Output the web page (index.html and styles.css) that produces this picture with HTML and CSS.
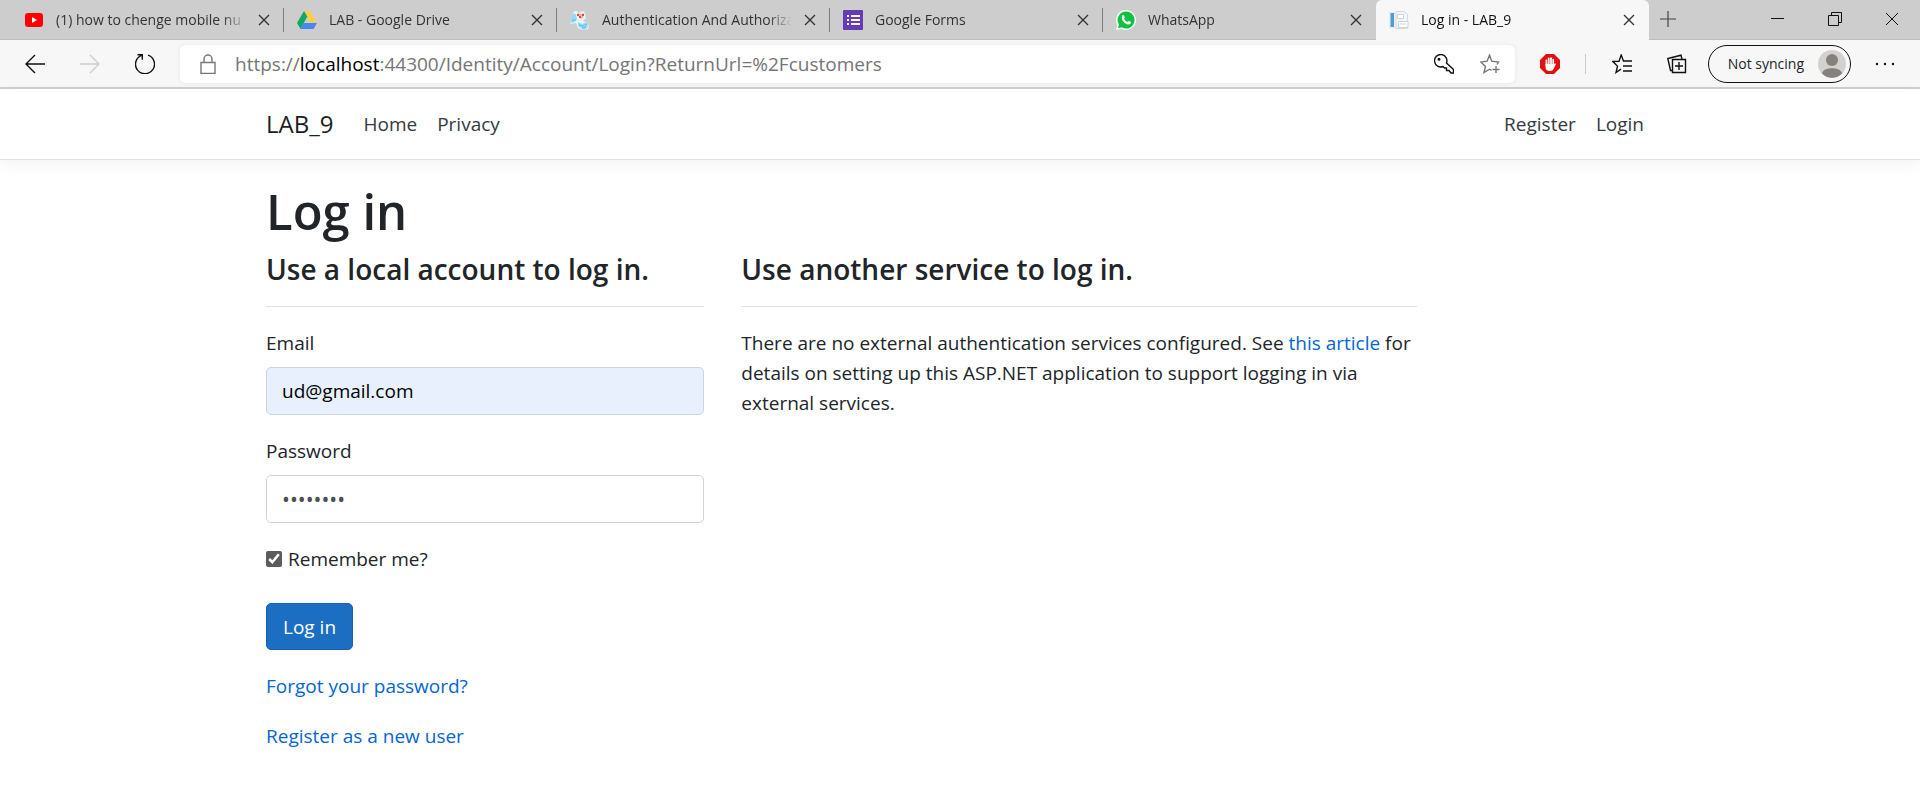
FILE: index.html
```
<!DOCTYPE html>
<html lang="en">
<head>
<meta charset="utf-8">
<title>Log in - LAB_9</title>
<link rel="stylesheet" href="styles.css">
</head>
<body>
<div class="browser">
  <div class="tabstrip">
    <div class="tab">
      <svg class="favicon" viewBox="0 0 20 20"><rect x="1" y="3" width="18" height="14" rx="3" fill="#f00"/><path d="M8 7l5 3-5 3z" fill="#fff"/></svg>
      <span class="tab-title">(1) how to chenge mobile nu</span>
      <button class="tab-close" aria-label="Close tab"><svg viewBox="0 0 12 12"><path d="M1 1l10 10M11 1L1 11"/></svg></button>
    </div>
    <div class="tab">
      <svg class="favicon" viewBox="0 0 20 20"><path d="M7 1h6l7 12h-6.500z" fill="#ffcf48"/><path d="M7 1l3.300 5.600L3.600 19 0 13z" fill="#11a861"/><path d="M6.500 13H20l-3.400 6h-13z" fill="#4787f3"/></svg>
      <span class="tab-title">LAB - Google Drive</span>
      <button class="tab-close" aria-label="Close tab"><svg viewBox="0 0 12 12"><path d="M1 1l10 10M11 1L1 11"/></svg></button>
    </div>
    <div class="tab">
      <svg class="favicon" viewBox="0 0 20 20"><path d="M4 1l3 0 1 2 5-2 2 2 1 5-3 3 4 2 2 3-1 3-5 1-5-2-2-5-5 1-1-2 2-4z" fill="#e4f4fc"/><path d="M8 3l3 1 3-1-1 5-2 1-3-3z" fill="#f6b29a"/><path d="M7 4h2v2H7zM12 4h2v2h-2zM9 6h2v2H9z" fill="#e8472b"/><path d="M3 4l3 0 1 6-4 3-3-1zM8 12l4 2 5-2 1 5-4 3-6-4z" fill="#9ad8f8"/><path d="M9 15l4 1 4-2M2 10l4 0M12 18l4-1" stroke="#5fbcec" fill="none"/></svg>
      <span class="tab-title">Authentication And Authoriza</span>
      <button class="tab-close" aria-label="Close tab"><svg viewBox="0 0 12 12"><path d="M1 1l10 10M11 1L1 11"/></svg></button>
    </div>
    <div class="tab">
      <svg class="favicon" viewBox="0 0 20 20"><rect width="20" height="20" rx="1" fill="#673ab7"/><path d="M4 5h2v2H4zM8 5h9v2H8zM4 9h2v2H4zM8 9h9v2H8zM4 13h2v2H4zM8 13h9v2H8z" fill="#fff"/></svg>
      <span class="tab-title">Google Forms</span>
      <button class="tab-close" aria-label="Close tab"><svg viewBox="0 0 12 12"><path d="M1 1l10 10M11 1L1 11"/></svg></button>
    </div>
    <div class="tab">
      <svg class="favicon" viewBox="0 0 20 20"><path d="M10 0a10 10 0 1 1-4.500 18.900L0 20l1.300-5A10 10 0 0 1 10 0z" fill="#f4fbf5"/><path d="M10 1.500a8.500 8.500 0 1 1-4.300 15.800L2 18.200l1-3.600A8.500 8.500 0 0 1 10 1.500z" fill="#12c143"/><path d="M6.500 5.200c.7-.5 1.200-.3 1.500.4l.7 1.600c.2.500-.7 1.100-.7 1.500.8 1.500 1.900 2.500 3.400 3.200.5 0 1-1.200 1.500-1l1.800.9c.5.300.2 1.400-.3 1.900-3.500 3.100-10.800-4-7.900-8.500z" fill="#fff"/></svg>
      <span class="tab-title">WhatsApp</span>
      <button class="tab-close" aria-label="Close tab"><svg viewBox="0 0 12 12"><path d="M1 1l10 10M11 1L1 11"/></svg></button>
    </div>
    <div class="tab tab-active">
      <svg class="favicon" viewBox="0 0 20 20"><path d="M0 2h6v17H0z" fill="#e9eff3"/><path d="M1.500 3h3.500v14H1.500z" fill="#4f9dcc"/><path d="M7 1.500h8l3.500 3v14H7z" fill="#f3f5f8" stroke="#d3d9df"/><path d="M8.500 4.500h6v4h-6zM9.500 11.500h9.500v6H9.500z" fill="#fff" stroke="#cbd3db"/><path d="M11 14h6" stroke="#cbd3db"/></svg>
      <span class="tab-title">Log in - LAB_9</span>
      <button class="tab-close" aria-label="Close tab"><svg viewBox="0 0 12 12"><path d="M1 1l10 10M11 1L1 11"/></svg></button>
    </div>
    <button class="new-tab" aria-label="New tab"><svg viewBox="0 0 16 16"><path d="M8 0v16M0 8h16"/></svg></button>
    <div class="window-controls">
      <button aria-label="Minimize"><svg viewBox="0 0 14 14"><path d="M0 6.500h13"/></svg></button>
      <button aria-label="Restore"><svg viewBox="0 0 14 14"><path d="M.5 3.500h10v10H.5zM3.500 3V.5h10v10H11"/></svg></button>
      <button aria-label="Close window"><svg viewBox="0 0 14 14"><path d="M1 1l12 12M13 1L1 13"/></svg></button>
    </div>
  </div>

  <div class="toolbar">
    <div class="nav-buttons">
      <button aria-label="Back"><svg viewBox="0 0 20 20"><path d="M20 10H1M10 1l-9 9 9 9"/></svg></button>
      <button aria-label="Forward" disabled><svg viewBox="0 0 20 20"><path d="M0 10h19M10 1l9 9-9 9"/></svg></button>
      <button aria-label="Refresh"><svg viewBox="0 0 20 20"><path d="M13 1.200a9.500 9.500 0 1 1-6.500.2M2.500.7h4.800v5"/></svg></button>
    </div>
    <div class="address">
      <svg class="lock" viewBox="0 0 16 20"><path d="M1 8.500h14v11H1zM4 8V5a4 4 0 0 1 8 0v3"/></svg>
      <span class="url">https://<span class="host">localhost</span>:44300/Identity/Account/Login?ReturnUrl=%2Fcustomers</span>
      <button class="key" aria-label="Passwords"><svg viewBox="0 0 20 20"><path d="M12.500 9A6.200 6.200 0 1 0 9 12.500l1.500 1.500h2v2.500h2.500l2 2.500h2.500v-3.500z"/><circle cx="5" cy="5.200" r=".8"/></svg></button>
      <button class="star" aria-label="Add to favorites"><svg viewBox="0 0 20 20"><path d="M17 10.500L18.500 8l-6.800-.8L9.500 1 7.200 7.200.8 8l4.700 4.500L4 18.500l5.500-3.300 2 1.200M16 12v7M12.500 15.500h7"/></svg></button>
    </div>
    <div class="actions">
      <button class="adblock" aria-label="AdBlock"><svg viewBox="0 0 20 20"><path d="M6 0h8l6 6v8l-6 6H6l-6-6V6z" fill="#e60d0d"/><path d="M5.500 10h8.500l1-.8 1 .8-2.500 5c-.8 1.500-1.800 2-3.500 2-3 0-4.500-1.500-4.500-4z" fill="#fff"/><path d="M6.400 11V6.300M8.700 11V4.300M11 11V4M13.200 11V5.500" stroke="#fff" stroke-width="1.700" stroke-linecap="round"/></svg></button>
      <span class="divider"></span>
      <button aria-label="Favorites"><svg viewBox="0 0 20 20"><path d="M20 7H11.500L9.200 1 7 7.200.8 7.500l4.700 4.600L4 18.500l5-3.300M11 12h9M11 17h9"/></svg></button>
      <button aria-label="Collections"><svg viewBox="0 0 20 20"><path d="M5.500 5.500h13v13h-13zM12 8v8M8 12h8M5 16.500h-1.500L.8 4.500 14 1.200l.9 3.600"/></svg></button>
      <button class="profile"><span>Not syncing</span><svg viewBox="0 0 28 28"><circle cx="14" cy="14" r="14" fill="#d3d1cd"/><circle cx="14" cy="10" r="6" fill="#85817d"/><path d="M4 23.500C5 16.500 23 16.500 24 23.500a14 14 0 0 1-20 0z" fill="#85817d"/></svg></button>
      <button aria-label="Settings and more"><svg class="dots" viewBox="0 0 20 20"><circle cx="2" cy="10" r="1.200"/><circle cx="10" cy="10" r="1.200"/><circle cx="18" cy="10" r="1.200"/></svg></button>
    </div>
  </div>
</div>

<header class="site-header">
  <nav class="container site-nav">
    <a class="brand" href="#">LAB_9</a>
    <a class="nav-link" href="#">Home</a>
    <a class="nav-link" href="#">Privacy</a>
    <div class="nav-account">
      <a class="nav-link" href="#">Register</a>
      <a class="nav-link" href="#">Login</a>
    </div>
  </nav>
</header>

<main class="container">
  <h1>Log in</h1>
  <div class="columns">
    <section>
      <form>
        <h4>Use a local account to log in.</h4>
        <hr>
        <div class="form-group">
          <label for="email">Email</label>
          <input class="form-control autofilled" id="email" type="email" value="ud@gmail.com">
        </div>
        <div class="form-group">
          <label for="password">Password</label>
          <input class="form-control password" id="password" type="password" value="password">
        </div>
        <label class="remember"><input type="checkbox" checked>Remember me?</label>
        <button class="btn" type="submit">Log in</button>
        <p><a href="#">Forgot your password?</a></p>
        <p><a href="#">Register as a new user</a></p>
      </form>
    </section>
    <section>
      <h4>Use another service to log in.</h4>
      <hr>
      <p>There are no external authentication services configured. See <a href="#">this article</a> for details on setting up this ASP.NET application to support logging in via external services.</p>
    </section>
  </div>
</main>
</body>
</html>
```
FILE: styles.css
```
* { box-sizing: border-box; }

body {
  margin: 0;
  background: #fff;
  color: #212529;
  font: 19px/30px "Open Sans", "Noto Sans", sans-serif;
}

button {
  padding: 0;
  border: 0;
  background: none;
  color: inherit;
  font: inherit;
}

svg { display: block; }

a { color: #0366d6; text-decoration: none; }

/* Browser window */
.browser { border-bottom: 2px solid #cecece; background: #f7f7f7; }

.tabstrip {
  display: flex;
  height: 40px;
  padding-left: 11px;
  background: #cdcdcd;
  box-shadow: inset 0 -1px #bdbdbd;
  font-size: 14px;
  line-height: 20px;
}

.tab {
  display: flex;
  flex: 0 1 273px;
  align-items: center;
  min-width: 0;
  padding: 0 14px 0 13px;
  color: #333;
  background: linear-gradient(#7d7d7d, #7d7d7d) right center / 1px 24px no-repeat;
}

.tab:nth-child(5) { background: none; }

.tab-active {
  border-radius: 6px 6px 0 0;
  background: #f7f7f7;
  color: #111;
}

.favicon { flex: none; width: 20px; height: 20px; margin-right: 12px; }

.tab-title {
  flex: 1;
  overflow: hidden;
  white-space: nowrap;
  mask-image: linear-gradient(90deg, #000 calc(100% - 24px), transparent);
}

.tab-close { margin-left: 12px; }
.tab-close svg { width: 12px; height: 12px; fill: none; stroke: #333; stroke-width: 1.4; }

.new-tab { padding: 0 11px 2px; }
.new-tab svg { width: 16px; height: 16px; fill: none; stroke: #444; stroke-width: 1.2; }

.window-controls { display: flex; margin-left: auto; }
.window-controls button { width: 57px; padding-bottom: 3px; display: grid; place-items: center; }
.window-controls svg { width: 14px; height: 14px; fill: none; stroke: #111; }

.toolbar {
  display: flex;
  align-items: center;
  height: 47px;
  padding: 0 25px;
}

.toolbar svg { width: 20px; height: 20px; fill: none; stroke: #111; stroke-width: 1.4; }
.nav-buttons { display: flex; gap: 35px; }
.nav-buttons button:disabled svg { stroke: #ccc; }

.address {
  display: flex;
  flex: 1;
  align-items: center;
  height: 38px;
  margin-left: 25px;
  padding: 0 15px 0 20px;
  border-radius: 6px;
  background: #fff;
  box-shadow: 0 0 4px #e6e6e6;
}

.address .lock { width: 16px; margin-right: 19px; stroke: #777; }
.url { flex: 1; color: #757575; font-size: 19px; white-space: nowrap; }
.host { color: #000; }
.key { margin-right: 26px; }
.star svg { stroke: #777; }

.actions { display: flex; align-items: center; margin-left: 25px; }
.actions > * { margin-right: 35px; }
.actions .adblock { margin-right: 25px; }
.actions .adblock svg { stroke: none; }
.divider { width: 1px; height: 20px; background: #ccc; }
.actions .divider { margin-right: 26px; }
.actions > button:last-child { margin-right: 0; }
.toolbar .dots { fill: #111; stroke: none; }

.actions .profile {
  display: flex;
  align-items: center;
  gap: 14px;
  height: 38px;
  margin: 0 24px 0 -14px;
  padding: 0 4px 0 19px;
  border: 1px solid #111;
  border-radius: 19px;
  font-size: 14px;
  white-space: nowrap;
}

.actions .profile svg { width: 28px; height: 28px; stroke: none; }

/* Site */
.container { max-width: 1426px; margin: 0 auto; padding: 0 19px; }

.site-header {
  border-bottom: 1px solid #dee2e6;
  box-shadow: 0 5px 15px rgba(0, 0, 0, .05);
}

.site-nav { display: flex; align-items: center; height: 70px; }
.brand { margin-right: 20px; color: #1b1e21; font-size: 24px; }
.nav-link { padding: 0 10px; color: #343a40; }
.nav-account { display: flex; margin-left: auto; }

h1 { margin: 21px 0 10px; font-size: 49px; font-weight: 600; line-height: 60px; }
h4 { margin: 0; font-size: 28px; font-weight: 600; line-height: 36px; }
hr { margin: 19px 0 21px; border: 0; border-top: 1px solid #e2e2e2; }

.columns { display: grid; grid-template-columns: 438fr 675fr 200fr; gap: 37px; }

.form-group { margin-bottom: 21px; }
.form-group label { display: block; margin-bottom: 9px; }

.form-control {
  display: block;
  width: 100%;
  height: 48px;
  padding: 8px 15px;
  border: 1px solid #ced4da;
  border-radius: 5px;
  background: #fff;
  color: #495057;
  font: inherit;
}

.password { font-size: 21px; }
.autofilled { background: #e8f0fe; color: #000; }

.remember { display: flex; align-items: center; gap: 6px; margin-bottom: 29px; }
.remember input { width: 16px; height: 16px; margin: 0; accent-color: #5c5c5c; }

.btn {
  display: block;
  height: 47px;
  margin-bottom: 21px;
  padding: 0 16px;
  border: 1px solid #1861ac;
  border-radius: 5px;
  background: #1b6ec2;
  color: #fff;
}

p { margin: 0 0 20px; }
```
